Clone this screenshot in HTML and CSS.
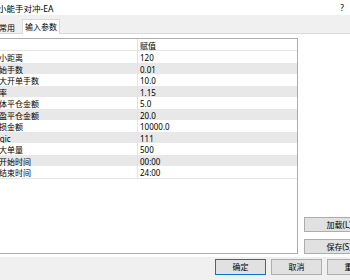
FILE: index.html
```html
<!DOCTYPE html>
<html lang="zh-CN">
<head>
    <meta charset="UTF-8">
    <meta name="viewport" content="width=device-width, initial-scale=1.0">
    <title>小能手对冲-EA</title>
    <link rel="stylesheet" href="styles.css">
</head>
<body>
<div class="window">
    <div class="titlebar">
        <span class="title">小能手对冲-EA</span>
        <span class="help">?</span>
    </div>

    <div class="tabs">
        <div class="tab">常用</div>
        <div class="tab active">输入参数</div>
    </div>

    <div class="main">
        <div class="params">
            <div class="row head">
                <div class="cell"></div>
                <div class="cell value">赋值</div>
            </div>
            <div class="row"><div class="cell">最小距离</div><div class="cell value">120</div></div>
            <div class="row alt"><div class="cell">初始手数</div><div class="cell value">0.01</div></div>
            <div class="row"><div class="cell">最大开单手数</div><div class="cell value">10.0</div></div>
            <div class="row alt"><div class="cell">倍率</div><div class="cell value">1.15</div></div>
            <div class="row"><div class="cell">整体平仓金额</div><div class="cell value">5.0</div></div>
            <div class="row alt"><div class="cell">止盈平仓金额</div><div class="cell value">20.0</div></div>
            <div class="row"><div class="cell">止损金额</div><div class="cell value">10000.0</div></div>
            <div class="row alt"><div class="cell latin">Magic</div><div class="cell value">111</div></div>
            <div class="row"><div class="cell">最大单量</div><div class="cell value">500</div></div>
            <div class="row alt"><div class="cell">日开始时间</div><div class="cell value">00:00</div></div>
            <div class="row last"><div class="cell">日结束时间</div><div class="cell value">24:00</div></div>
        </div>

        <div class="side">
            <button class="btn side-btn">加载(L)</button>
            <button class="btn side-btn">保存(S)</button>
        </div>
    </div>

    <div class="footer">
        <button class="btn default">确定</button>
        <button class="btn">取消</button>
        <button class="btn">重置</button>
    </div>
</div>
</body>
</html>
```

FILE: styles.css
```css
body {
    margin: 0;
    padding: 0;
    background-color: #fff;
    font-family: "Noto Sans", "Noto Sans CJK SC", sans-serif;
    font-size: 8px;
    color: #000;
}

.window {
    width: 350px;
    height: 280px;
    overflow: hidden;
    display: flex;
    flex-direction: column;
}

.titlebar {
    height: 15px;
    display: flex;
    justify-content: space-between;
    align-items: center;
    flex-shrink: 0;
    font-size: 8.5px;
}

.title {
    margin-left: -2px;
}

.help {
    margin-right: 6px;
}

.tabs {
    height: 18px;
    background-color: #f0f0f0;
    border-bottom: 1px solid #dadada;
    display: flex;
    align-items: flex-end;
    flex-shrink: 0;
}

.tab {
    height: 13px;
    line-height: 13px;
    margin-left: -2px;
    width: 19px;
    text-align: left;
    margin-bottom: -1px;
    border: 1px solid transparent;
    border-bottom: none;
}

.tab.active {
    margin-left: 3px;
    width: auto;
    padding: 0 2px;
    background-color: #fff;
    border-color: #dadada;
    height: 14px;
    line-height: 14px;
}

.main {
    flex: 1;
    display: flex;
    padding: 4px 0 3px 0;
    min-height: 0;
}

.params {
    margin-left: -12px;
    width: 308px;
    border: 1px solid #adadad;
    flex-shrink: 0;
}

.row {
    display: grid;
    grid-template-columns: 148px 1fr;
    height: 11.5px;
    line-height: 11.5px;
}

.row.head {
    height: 11px;
    line-height: 12px;
    border-bottom: 1px solid #e5e5e5;
}

.row.alt {
    background-color: #e8e8e8;
}

.row.last {
    border-bottom: 1px solid #e5e5e5;
}

.cell {
    padding-left: 2px;
    padding-top: 1px;
    white-space: nowrap;
    overflow: hidden;
}

.cell.latin {
    text-indent: -3px;
}

.cell.value {
    padding-left: 2px;
    text-indent: 0;
    border-left: 1px solid #e3e3e3;
}

.side {
    display: flex;
    flex-direction: column;
    justify-content: flex-end;
    gap: 7px;
    padding-left: 6px;
}

.btn {
    font-family: "Noto Sans", "Noto Sans CJK SC", sans-serif;
    font-size: 8px;
    color: #000;
    background-color: #e1e1e1;
    border: 1px solid #adadad;
    padding: 0;
    height: 16px;
    line-height: 14px;
    width: 51px;
    flex-shrink: 0;
}

.side-btn {
    width: 70px;
    height: 15px;
    line-height: 13px;
}

.btn.default {
    border-color: #0078d7;
}

.footer {
    height: 23px;
    background-color: #f0f0f0;
    display: flex;
    gap: 5px;
    padding: 2px 0 0 215px;
    box-sizing: border-box;
    flex-shrink: 0;
}
```
